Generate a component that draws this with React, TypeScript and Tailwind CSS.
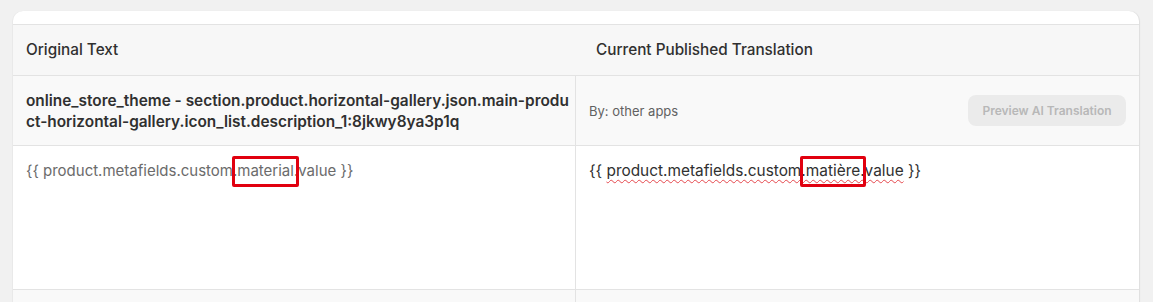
import React from "react";

export default function App() {
  const font = { fontFamily: "Inter, 'Noto Sans', sans-serif" };
  return (
    <div className="min-h-[302px] w-full bg-[#f1f1f1] pt-[11px]" style={font}>
      <div className="ml-[13px] mr-[14px] overflow-hidden rounded-t-[10px] bg-white pt-[13px] shadow-[1px_0_1px_rgba(0,0,0,0.08),-1px_0_0_rgba(0,0,0,0.03)]">
        {/* header */}
        <div className="grid h-[52px] grid-cols-2 border-t border-b border-[#e3e3e3] bg-[#f7f7f7] text-[15.3px] font-medium text-[#303030]">
          <div className="flex items-center pl-[13px]">Original Text</div>
          <div className="flex items-center pl-[20px]">Current Published Translation</div>
        </div>
        {/* row 2 */}
        <div className="grid h-[70px] grid-cols-2 border-b border-[#e3e3e3] bg-[#f9f9f9]">
          <div className="flex items-center border-r border-[#e3e3e3] pl-[13px] pr-[6px]">
            <p className="break-all text-[15.4px] font-semibold leading-[21px] text-[#303030]">
              online_store_theme - section.product.horizontal-gallery.json.main-product-horizontal-gallery.icon_list.description_1:8jkwy8ya3p1q
            </p>
          </div>
          <div className="flex items-center justify-between pl-[13px] pr-[13px]">
            <span className="mt-[3px] text-[13px] text-[#616161]">By: other apps</span>
            <button className="h-[31px] w-[158px] rounded-[8px] bg-[#ebebeb] text-[12px] font-semibold text-[#b8b8b8]">
              Preview AI Translation
            </button>
          </div>
        </div>
        {/* row 3 */}
        <div className="grid h-[144px] grid-cols-2 border-b border-[#e3e3e3] bg-white">
          <div className="border-r border-[#e3e3e3] pl-[13px] pt-[15px] text-[15px] leading-[20px] text-[#6b6b6b]">
            {"{{ product.metafields.custom"}
            <span className="relative">
              .material.
              <span className="absolute -left-[1px] -right-[1px] -top-[5px] -bottom-[7px] rounded-[2px] border-[3px] border-[#e1000f]" />
            </span>
            {"value }}"}
          </div>
          <div className="pl-[13px] pt-[15px] text-[15.4px] leading-[20px] text-[#303030]">
            {"{{ "}
            <span className="underline decoration-[#e5484d] decoration-wavy decoration-1 underline-offset-[3px]">
              product.metafields.custom
              <span className="relative">
                .matière.
                <span className="absolute -left-[1px] -right-[1px] -top-[5px] -bottom-[7px] rounded-[2px] border-[3px] border-[#e1000f]" />
              </span>
              value
            </span>
            {" }}"}
          </div>
        </div>
        {/* row 4 (cut off) */}
        <div className="grid h-[40px] grid-cols-2 bg-[#f9f9f9]">
          <div className="border-r border-[#e3e3e3]" />
          <div />
        </div>
      </div>
    </div>
  );
}
